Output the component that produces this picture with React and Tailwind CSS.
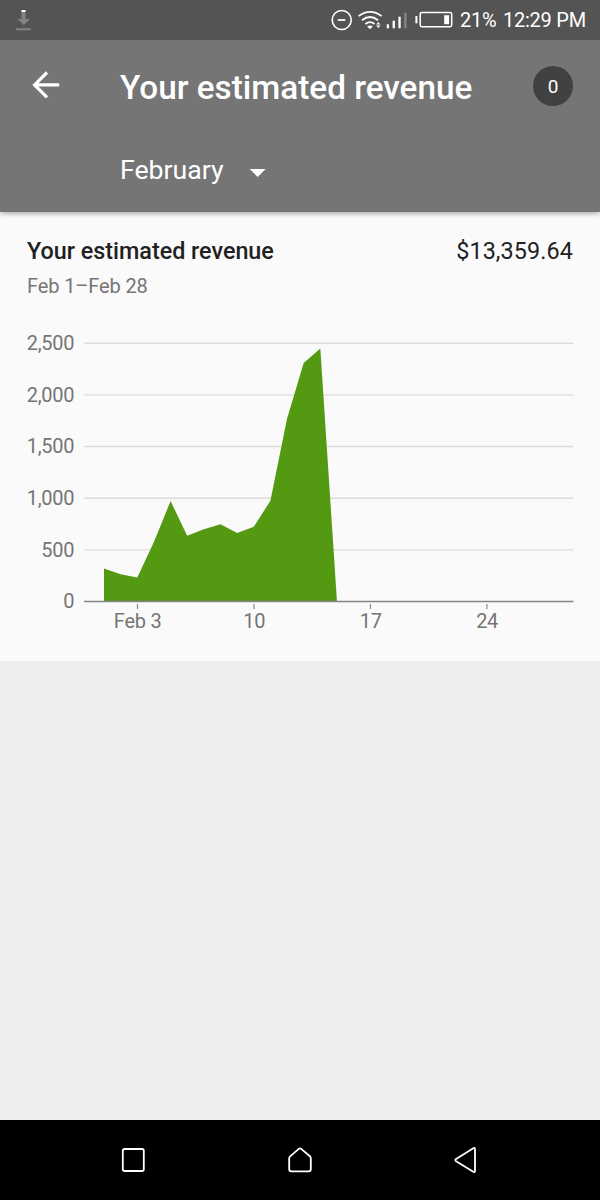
import React from "react";

const ZERO_Y = 271.5;
const UNIT = 51.65 / 500;
const START_X = 104;
const STEP = 16.64;

const revenue = [320, 265, 232, 575, 972, 637, 700, 748, 662, 723, 975, 1770, 2310, 2448, 0];
const levels = [2500, 2000, 1500, 1000, 500];
const ticks = [
  { day: 3, label: "Feb 3" },
  { day: 10, label: "10" },
  { day: 17, label: "17" },
  { day: 24, label: "24" },
];

const dayX = (day) => START_X + (day - 1) * STEP;
const valueY = (value) => ZERO_Y - value * UNIT;

function StatusBar() {
  return (
    <div className="z-10 flex h-10 shrink-0 items-center justify-between bg-[#545454] text-white">
      <svg className="h-10 w-12" viewBox="0 0 48 40">
        <path d="M21.5 12h4v7h4.5L23.7 25 17.5 19h4z" fill="#828282" />
        <rect x="21.5" y="10" width="4" height="2" fill="#fff" />
        <rect x="16" y="28.3" width="15" height="2" fill="#828282" />
      </svg>
      <div className="flex items-center">
        <svg className="h-10 w-[140px]" viewBox="320 0 140 40" fill="none" stroke="#fff">
          <circle cx="341.7" cy="20" r="9.5" strokeWidth="1.6" />
          <path d="M337.7 20h7.6" strokeWidth="1.8" />
          <g strokeWidth="1.8">
            <path d="M358.6 16.1q11.5-8.5 23 0" />
            <path d="M362 20.2q8-6.3 16 0" />
            <path d="M365.4 24q4.6-3.7 9.2 0" />
          </g>
          <path d="M367.1 26.5q2.9-2.2 5.8 0L370 29.2z" fill="#fff" stroke="none" />
          <path d="M376.2 24.6l2.1-2.5 2.1 2.5zM376.2 25.6l2.1 2.5 2.1-2.5z" fill="#fff" stroke="none" />
          <g fill="#fff" stroke="none">
            <rect x="386.7" y="24.3" width="2.3" height="4" />
            <rect x="392.6" y="20.7" width="2.3" height="7.6" />
            <rect x="398.4" y="16.7" width="2.3" height="11.6" />
            <rect x="404.2" y="12.7" width="2.3" height="15.6" fill="#858585" />
            <rect x="415.4" y="16" width="2" height="7.3" />
            <rect x="444.2" y="15.2" width="4.9" height="9" />
          </g>
          <rect x="420.2" y="12.5" width="31.5" height="14.3" rx="1.7" strokeWidth="1.5" />
        </svg>
        <span className="w-[43px] text-[20px] leading-10 tracking-[-0.25px] whitespace-nowrap">21%</span>
        <span className="w-[97px] text-[20px] leading-10 tracking-[-0.25px] whitespace-nowrap">12:29 PM</span>
      </div>
    </div>
  );
}

function Header() {
  return (
    <header className="relative flex h-[172px] shrink-0 flex-col bg-[#757575] text-white shadow-[0_1px_6px_rgba(0,0,0,0.4)]">
      <div className="flex h-[92px] items-center pr-[27px] pl-[30px]">
        <svg className="h-8 w-8 shrink-0" viewBox="30 70 32 32" fill="none" stroke="#fff" strokeWidth="3.2">
          <path d="M59.2 84.9H35M47 72.5L34.6 84.9 47 97.3" />
        </svg>
        <h1 className="ml-[58px] pt-[3px] text-[33.3px] leading-10 font-medium whitespace-nowrap">
          Your estimated revenue
        </h1>
        <span className="ml-auto flex h-10 w-10 items-center justify-center rounded-full bg-[#414141] pt-[2px] text-[19px]">
          0
        </span>
      </div>
      <div className="flex h-[76px] items-center pl-[120px]">
        <span className="text-[26.67px] leading-9">February</span>
        <svg className="mt-[6px] ml-[25px] h-[10px] w-[18px]" viewBox="0 0 18 10">
          <path d="M.7 1h16L8.7 9z" fill="#fff" />
        </svg>
      </div>
    </header>
  );
}

function RevenueChart() {
  const line = revenue.map((value, i) => `${dayX(i + 1)},${valueY(value)}`).join(" ");
  const area = `${START_X},${ZERO_Y} ${line}`;
  return (
    <svg
      className="block h-[331px] w-[600px] tracking-[-0.25px]"
      viewBox="0 0 600 331"
      fontSize="20"
      fill="#757575"
    >
      {levels.map((level) => (
        <g key={level}>
          <path d={`M84 ${valueY(level)}H573.5`} stroke="#dcdcdc" strokeWidth="1.4" />
          <text x="74.3" y={valueY(level) + 6.9} textAnchor="end">
            {level.toLocaleString("en-US")}
          </text>
        </g>
      ))}
      <polygon points={area} fill="#549912" />
      <path d={`M84 ${ZERO_Y}H573.5`} stroke="#858585" strokeWidth="1.4" />
      <text x="74.3" y={ZERO_Y + 6.9} textAnchor="end">0</text>
      {ticks.map(({ day, label }) => (
        <g key={day}>
          <path d={`M${dayX(day) + 0.2} 274v5`} stroke="#8a8a8a" strokeWidth="1.2" />
          <text x={dayX(day) + 0.4} y="297.5" textAnchor="middle">{label}</text>
        </g>
      ))}
    </svg>
  );
}

function RevenueCard() {
  return (
    <section className="flex h-[449px] shrink-0 flex-col bg-[#fafafa] pt-[24px]">
      <div className="flex justify-between px-[27px] text-[23.33px] leading-[30px] text-[#212121]">
        <h2 className="font-medium">Your estimated revenue</h2>
        <span className="tracking-[0.12px]">$13,359.64</span>
      </div>
      <p className="mt-[8px] px-[27px] text-[20px] leading-6 tracking-[-0.12px] text-[#757575]">Feb 1–Feb 28</p>
      <div className="mt-[32px]">
        <RevenueChart />
      </div>
    </section>
  );
}

function NavigationBar() {
  return (
    <nav className="mt-auto flex h-20 shrink-0 items-center justify-between bg-black px-[119px]">
      <svg className="h-7 w-7" viewBox="119 1146 28 28" fill="none" stroke="#fff" strokeWidth="1.8">
        <rect x="122.8" y="1149" width="21" height="22" rx="1.8" />
      </svg>
      <svg className="h-7 w-7" viewBox="286 1146 28 28" fill="none" stroke="#fff" strokeWidth="1.8" strokeLinejoin="round">
        <path d="M298.8 1148.9q1.2-1 2.4 0l8.7 7.4q.9.8.9 2v11q0 2-2 2h-17.6q-2 0-2-2v-11q0-1.2.9-2z" />
      </svg>
      <svg className="h-7 w-7" viewBox="453 1146 28 28" fill="none" stroke="#fff" strokeWidth="1.8" strokeLinejoin="round">
        <path d="M473.3 1148.3q1.7-1 1.7 1v21.5q0 2-1.7 1l-17.2-10.6q-1.6-1.1 0-2.2z" />
      </svg>
    </nav>
  );
}

export default function App() {
  return (
    <main className="flex h-[1200px] w-[600px] flex-col overflow-hidden bg-[#ededed] font-['Roboto',sans-serif]">
      <StatusBar />
      <Header />
      <RevenueCard />
      <NavigationBar />
    </main>
  );
}
